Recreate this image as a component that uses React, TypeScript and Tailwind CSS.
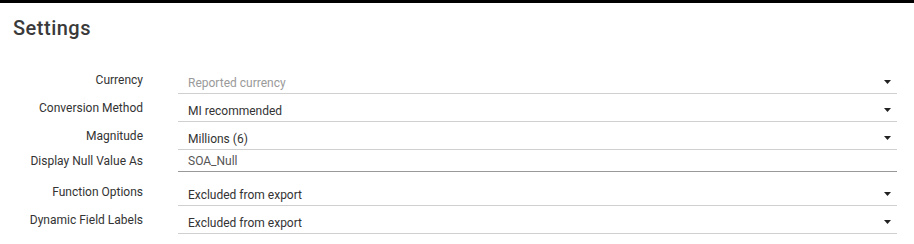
const rows: { label: string; value: string; kind: "select" | "input"; placeholder?: boolean }[] = [
  { label: "Currency", value: "Reported currency", kind: "select", placeholder: true },
  { label: "Conversion Method", value: "MI recommended", kind: "select" },
  { label: "Magnitude", value: "Millions (6)", kind: "select" },
  { label: "Display Null Value As", value: "SOA_Null", kind: "input" },
  { label: "Function Options", value: "Excluded from export", kind: "select" },
  { label: "Dynamic Field Labels", value: "Excluded from export", kind: "select" },
];

function Caret() {
  return (
    <svg width="7" height="4" viewBox="0 0 7 4" className="shrink-0">
      <path d="M0 0h7L3.5 4z" fill="#222" />
    </svg>
  );
}

export default function App() {
  return (
    <div className="min-h-screen bg-white font-['Roboto',sans-serif] text-[#333]">
      <div className="h-[3px] bg-black" />
      <h1 className="pl-[13px] pt-[14px] text-[20px] font-medium leading-[22px] tracking-[0.5px] text-[#3a3a3a]">Settings</h1>

      <div className="mt-[27px] pr-[17px]">
        {rows.map((r) =>
          r.kind === "select" ? (
            <div key={r.label} className={`flex items-center ${r.label === "Function Options" ? "mt-[6px]" : ""}`}>
              <div className="w-[143px] shrink-0 text-right text-[12px]">{r.label}</div>
              <div className="ml-[35px] flex h-[28px] flex-1 items-center border-b border-[#d0d0d0] pl-[10px] pr-[6px] pt-[7px]">
                <span className={`flex-1 text-[12px] ${r.placeholder ? "text-[#9a9a9a]" : "text-[#333]"}`}>{r.value}</span>
                <span className="-mt-[3px]">
                  <Caret />
                </span>
              </div>
            </div>
          ) : (
            <div key={r.label} className="flex items-center">
              <div className="w-[143px] shrink-0 text-right text-[12px]">{r.label}</div>
              <div className="ml-[35px] flex h-[22px] flex-1 items-center border-b border-[#999] pl-[10px]">
                <span className="text-[12px] text-[#555]">{r.value}</span>
              </div>
            </div>
          )
        )}
      </div>
    </div>
  );
}
